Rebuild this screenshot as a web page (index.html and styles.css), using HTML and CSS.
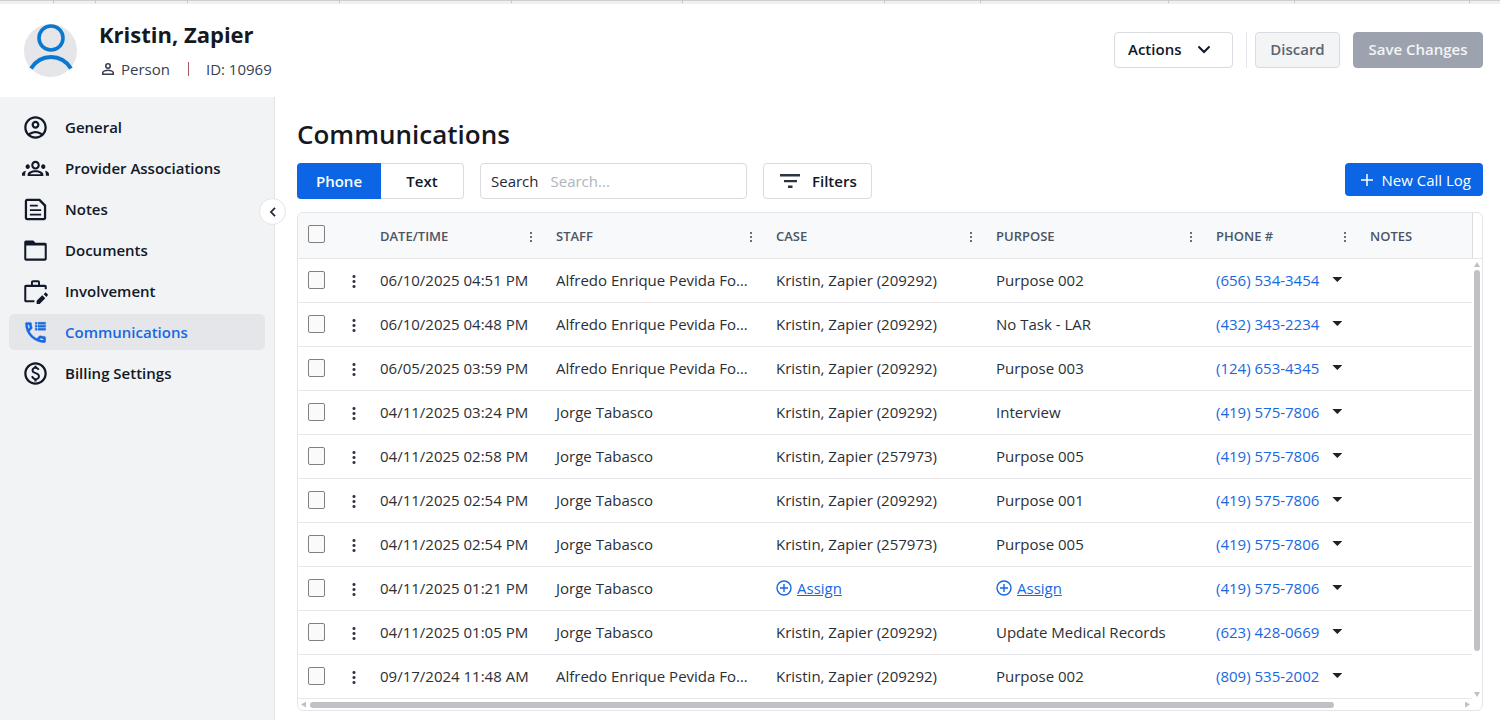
FILE: index.html
```
<!DOCTYPE html>
<html lang="en">
<head>
<meta charset="utf-8">
<title>Kristin, Zapier – Communications</title>
<link rel="stylesheet" href="styles.css">
</head>
<body>
<div class="tabstrip" aria-hidden="true"><i></i><i></i><i></i><i></i><i></i><i></i><i></i><i></i><i></i><i></i><i></i></div>
<header class="header">
  <svg class="avatar" viewBox="0 0 53 53" aria-hidden="true"><circle cx="26.500" cy="26.500" r="26.500" fill="#e5e6ea"/><circle cx="27" cy="14" r="12" fill="none" stroke="#0b78d0" stroke-width="3.600"/><path d="M7 44.500C12 36.500 19 33 27 33s15 3.500 20 11.500" fill="none" stroke="#0b78d0" stroke-width="4"/></svg>
  <div class="identity">
    <h2 class="name">Kristin, Zapier</h2>
    <div class="meta">
      <svg class="person" viewBox="0 0 12 12" fill="none" stroke="currentColor" stroke-width="1.600" aria-hidden="true"><circle cx="6" cy="3" r="2.200"/><path d="M.8 11.200V9.600C.8 8.200 4 7.200 6 7.200s5.200 1 5.200 2.400v1.600z"/></svg>
      <span>Person</span><span class="bar"></span><span>ID: 10969</span>
    </div>
  </div>
  <div class="header-actions">
    <button class="btn actions" type="button">Actions
      <svg width="14" height="9" viewBox="0 0 14 9" fill="none" stroke="currentColor" stroke-width="2" aria-hidden="true"><path d="M1.500 1.500 7 7l5.500-5.500"/></svg></button>
    <span class="rule"></span>
    <button class="btn discard" type="button">Discard</button>
    <button class="btn save" type="button">Save Changes</button>
  </div>
</header>
<div class="body">
  <aside class="sidebar">
    <nav class="nav">
      <a class="item" href="#"><svg viewBox="0 0 24 24"><path d="M12 2C6.480 2 2 6.480 2 12s4.480 10 10 10 10-4.480 10-10S17.520 2 12 2zM7.350 18.500C8.660 17.560 10.260 17 12 17s3.340.560 4.650 1.500C15.340 19.440 13.740 20 12 20s-3.340-.560-4.650-1.500zm10.790-1.380C16.450 15.800 14.320 15 12 15s-4.450.800-6.140 2.120C4.700 15.730 4 13.950 4 12c0-4.420 3.580-8 8-8s8 3.580 8 8c0 1.950-.700 3.730-1.860 5.120z"/><path d="M12 6c-1.930 0-3.500 1.570-3.500 3.500S10.070 13 12 13s3.500-1.570 3.500-3.500S13.930 6 12 6zm0 5c-.830 0-1.500-.670-1.500-1.500S11.170 8 12 8s1.500.670 1.500 1.500S12.830 11 12 11z"/></svg>General</a>
      <a class="item" href="#"><svg viewBox="0 0 24 24"><path d="M5 12.500c1.100 0 2-.900 2-2s-.700-2.300-1.800-2.300-2 .900-2 2 .700 2.300 1.800 2.300zM3.500 14C1.300 14.400 0 15.600 0 17.200V18.500h2.800v-1.300c0-1.200.300-2.200.700-3.200zM19 12.500c-1.100 0-2-.900-2-2s.700-2.300 1.800-2.300 2 .900 2 2-.700 2.300-1.800 2.300zM20.500 14c2.200.400 3.500 1.600 3.500 3.200v1.300h-2.800v-1.300c0-1.200-.300-2.200-.700-3.200zM12 13.500c-3.500 0-7 1.400-7 3.900v1.300h14v-1.300c0-2.500-3.500-3.900-7-3.900zM7.300 17c.7-1 2.600-1.600 4.700-1.600s4 .6 4.700 1.600zM12 7.200c1.100 0 1.900.8 1.900 1.900S13.100 11 12 11s-1.900-.8-1.900-1.900.8-1.900 1.900-1.900m0-2C9.800 5.200 8.200 6.900 8.200 9.100S9.800 12.900 12 12.900s3.800-1.600 3.800-3.800S14.200 5.200 12 5.200z"/></svg>Provider Associations</a>
      <a class="item" href="#"><svg viewBox="0 0 24 24"><path d="M7 15.700h10v1.600H7zM7 11.700h10v1.600H7zM7 7.700h7v1.600H7zM16 2.500H4.500c-1.100 0-2 .900-2 2v15c0 1.100.900 2 2 2h15c1.100 0 2-.900 2-2V8l-5.500-5.500zm3.500 17h-15v-15H15l4.500 4.500v10.500z"/></svg>Notes</a>
      <a class="item" href="#"><svg viewBox="0 0 24 24"><path d="M20.500 5H12l-2-2H3.500C2.600 3 2 3.700 2 4.600v14.800c0 .9.700 1.600 1.600 1.600h16.800c.9 0 1.600-.7 1.600-1.600V6.600C22 5.700 21.400 5 20.500 5zm-.3 14.200H3.800V7.500h16.400v11.700z"/></svg>Documents</a>
      <a class="item" href="#"><svg viewBox="0 0 24 24"><path d="M3.800 19.700V8h16.400v2H22V7.700c0-.9-.7-1.600-1.600-1.600H16V4c0-1.100-.7-1.900-1.800-1.900H9.800C8.700 2.100 8 2.900 8 4v2.100H3.600C2.700 6.100 2 6.800 2 7.700V20c0 .9.700 1.600 1.600 1.600H11v-1.900zM9.700 3.800h4.600v2.300H9.700zM13 20.300V23h2.700l5-5-2.700-2.700-5 5zM22.800 14.500l-1.300-1.300c-.3-.3-.7-.3-1 0l-1.200 1.200 2.400 2.400 1.100-1.200c.3-.3.3-.8 0-1.100z"/></svg>Involvement</a>
      <a class="item current" href="#" aria-current="page"><svg viewBox="0 0 24 24"><path d="M14.200 2.800H21v1.800h-6.800zM14.200 5.500H21v1.800h-6.800zM14.200 8.200H21V10h-6.800zM11.800 2.800h1.600v1.800h-1.600zM11.800 5.500h1.600v1.800h-1.600zM11.800 8.200h1.600V10h-1.600zM20 15.500c-1.250 0-2.450-.200-3.570-.570-.350-.110-.740-.030-1.020.240l-2.200 2.200c-2.830-1.440-5.150-3.750-6.590-6.590l2.200-2.200c.280-.280.360-.670.250-1.020C8.700 6.450 8.500 5.250 8.500 4c0-.550-.450-1-1-1H4c-.550 0-1 .450-1 1 0 9.390 7.610 17 17 17 .550 0 1-.450 1-1v-3.500c0-.550-.450-1-1-1zM5.030 5h1.500c.070.880.220 1.750.460 2.590L5.790 8.800C5.380 7.590 5.120 6.320 5.030 5zM19 18.970c-1.320-.090-2.590-.350-3.800-.750l1.200-1.200c.850.240 1.710.390 2.600.450v1.500z" stroke="currentColor" stroke-width=".3"/></svg>Communications</a>
      <a class="item" href="#"><svg viewBox="0 0 24 24"><path d="M12 2C6.480 2 2 6.480 2 12s4.480 10 10 10 10-4.480 10-10S17.520 2 12 2zm0 18c-4.410 0-8-3.590-8-8s3.590-8 8-8 8 3.590 8 8-3.590 8-8 8z"/><path d="M12.900 11.100c-1.780-.590-2.640-.960-2.640-1.900 0-1.020 1.110-1.390 1.810-1.390 1.310 0 1.790.990 1.900 1.340l1.580-.670c-.150-.450-.820-1.920-2.540-2.240V5h-2v1.260c-2.480.560-2.490 2.860-2.490 2.960 0 2.270 2.250 2.910 3.350 3.310 1.580.560 2.280 1.070 2.280 2.030 0 1.130-1.050 1.610-1.980 1.610-1.820 0-2.340-1.870-2.400-2.090l-1.660.670c.630 2.190 2.280 2.780 2.900 2.960V19h2v-1.240c.400-.090 2.900-.590 2.900-3.220 0-1.390-.610-2.610-3.010-3.440z"/></svg>Billing Settings</a>
    </nav>
    <button class="collapse" type="button" aria-label="Collapse menu"><svg width="8" height="10" viewBox="0 0 8 10" fill="none" stroke="currentColor" stroke-width="1.800" aria-hidden="true"><path d="M6 .8 2 5l4 4.200"/></svg></button>
  </aside>
  <main class="main">
    <h1 class="title">Communications</h1>
    <div class="toolbar">
      <div class="toggle">
        <button class="seg on" type="button">Phone</button><button class="seg" type="button">Text</button>
      </div>
      <div class="search"><label for="q">Search</label><input id="q" type="text" placeholder="Search..."></div>
      <button class="btn filters" type="button"><svg width="20" height="14" viewBox="0 0 20 14" fill="#2b3345" aria-hidden="true"><path d="M0 0h20v2.500H0zM4 6h13v2.300H4zM8 11.500h4.500V14H8z"/></svg>Filters</button>
      <button class="new" type="button"><svg width="12" height="12" viewBox="0 0 12 12" stroke="currentColor" stroke-width="1.500" aria-hidden="true"><path d="M6 0v12M0 6h12"/></svg>New Call Log</button>
    </div>
    <div class="panel">
      <table class="grid">
        <colgroup><col class="c-check"><col class="c-menu"><col class="c-date"><col class="c-wide"><col class="c-wide"><col class="c-wide"><col class="c-phone"><col></colgroup>
        <thead><tr>
          <th><input type="checkbox" aria-label="Select all"></th><th></th>
          <th><div class="head">DATE/TIME<button class="dots" type="button" aria-label="Date/time column menu"></button></div></th>
          <th><div class="head">STAFF<button class="dots" type="button" aria-label="Staff column menu"></button></div></th>
          <th><div class="head">CASE<button class="dots" type="button" aria-label="Case column menu"></button></div></th>
          <th><div class="head">PURPOSE<button class="dots" type="button" aria-label="Purpose column menu"></button></div></th>
          <th><div class="head">PHONE #<button class="dots" type="button" aria-label="Phone column menu"></button></div></th>
          <th>NOTES</th>
        </tr></thead>
        <tbody id="rows"></tbody>
      </table>
      <div class="gutter">
        <div class="corner"></div>
        <div class="vbar"><i class="arrow up"></i><div class="vtrack"><div class="vthumb"></div></div><i class="arrow down"></i></div>
      </div>
      <div class="hbar"><i class="arrow left"></i><div class="htrack"><div class="hthumb"></div></div><i class="arrow right"></i></div>
    </div>
  </main>
</div>
<script src="rows.js"></script>
</body>
</html>
```
FILE: rows.js
```
const calls = [
  ["06/10/2025 04:51 PM", "Alfredo Enrique Pevida Fonseca", "Kristin, Zapier (209292)", "Purpose 002", "(656) 534-3454"],
  ["06/10/2025 04:48 PM", "Alfredo Enrique Pevida Fonseca", "Kristin, Zapier (209292)", "No Task - LAR", "(432) 343-2234"],
  ["06/05/2025 03:59 PM", "Alfredo Enrique Pevida Fonseca", "Kristin, Zapier (209292)", "Purpose 003", "(124) 653-4345"],
  ["04/11/2025 03:24 PM", "Jorge Tabasco", "Kristin, Zapier (209292)", "Interview", "(419) 575-7806"],
  ["04/11/2025 02:58 PM", "Jorge Tabasco", "Kristin, Zapier (257973)", "Purpose 005", "(419) 575-7806"],
  ["04/11/2025 02:54 PM", "Jorge Tabasco", "Kristin, Zapier (209292)", "Purpose 001", "(419) 575-7806"],
  ["04/11/2025 02:54 PM", "Jorge Tabasco", "Kristin, Zapier (257973)", "Purpose 005", "(419) 575-7806"],
  ["04/11/2025 01:21 PM", "Jorge Tabasco", null, null, "(419) 575-7806"],
  ["04/11/2025 01:05 PM", "Jorge Tabasco", "Kristin, Zapier (209292)", "Update Medical Records", "(623) 428-0669"],
  ["09/17/2024 11:48 AM", "Alfredo Enrique Pevida Fonseca", "Kristin, Zapier (209292)", "Purpose 002", "(809) 535-2002"]
];
const assign = '<a class="assign" href="#"><svg width="16" height="16" viewBox="0 0 16 16" fill="none" stroke="currentColor" stroke-width="1.400" aria-hidden="true"><circle cx="8" cy="8" r="7"/><path d="M8 4v8M4 8h8"/></svg><span>Assign</span></a>';
document.getElementById("rows").innerHTML = calls.map(([date, staff, who, purpose, phone]) => `<tr>
  <td><input type="checkbox" aria-label="Select call ${date}"></td>
  <td><button class="dots row-dots" type="button" aria-label="Row menu"></button></td>
  <td>${date}</td><td>${staff}</td><td>${who || assign}</td><td>${purpose || assign}</td>
  <td><div class="phone"><a href="#">${phone}</a><button class="caret" type="button" aria-label="Phone options"></button></div></td>
  <td></td></tr>`).join("");
```
FILE: styles.css
```
* { box-sizing: border-box; }
html, body { height: 100%; }
body {
  margin: 0;
  display: flex;
  flex-direction: column;
  overflow: hidden;
  background: #fff;
  color: #1f2937;
  font: 15px/20px "Open Sans", sans-serif;
}
button { font: inherit; color: inherit; cursor: pointer; }
a { color: #1668e3; text-decoration: none; }
svg { flex: none; }

.tabstrip {
  flex: none;
  height: 4px;
  display: grid;
  grid-template-columns: 54fr 42fr 92fr 152fr 172fr 171fr 203fr 96fr 188fr 126fr 175fr;
  padding-right: 2%;
  background: linear-gradient(#cfcfd3 1px, #f0f0f3 1px);
}
.tabstrip i { height: 3px; border-right: 1px solid #c4c4c9; }

.header { flex: none; height: 93px; display: flex; padding: 18px 17px 0 24px; }
.avatar { width: 53px; height: 53px; margin-top: 2px; }
.identity { margin-left: 22px; }
.name { margin: 0; color: #15191f; font-size: 22px; line-height: 24px; font-weight: 700; }
.meta { display: flex; align-items: center; margin-top: 13px; padding-left: 3px; color: #374151; }
.person { width: 12px; height: 12px; margin-right: 7px; }
.bar { width: 1px; height: 14px; margin: 0 17px 0 18px; background: #a85a5a; }
.header-actions { display: flex; align-items: flex-start; margin-left: auto; padding-top: 10px; }
.btn {
  height: 36px;
  border: 1px solid #d9dbe1;
  border-radius: 4px;
  padding: 0 14px;
  background: #fff;
  color: #111827;
  font-weight: 600;
}
.actions { display: flex; align-items: center; gap: 16px; width: 119px; padding: 0 13px 2px; white-space: nowrap; }
.rule { width: 1px; height: 36px; margin: 0 8px 0 13px; background: #e5e7eb; }
.discard { width: 85px; padding: 0 0 2px; background: #f3f4f6; color: #5b6470; }
.save { width: 130px; margin-left: 13px; padding: 0 0 2px; border-color: #9ca3af; background: #9ca3af; color: #f3f4f6; }

.body { flex: 1; min-height: 0; display: flex; }
.sidebar { position: relative; flex: none; width: 275px; padding: 12px 9px; background: #f2f3f5; border-right: 1px solid #e2e4e8; }
.nav { display: flex; flex-direction: column; gap: 5px; }
.item { display: flex; align-items: center; gap: 16px; height: 36px; padding-left: 13px; border-radius: 5px; color: #111827; font-weight: 600; }
.item svg { width: 27px; height: 27px; fill: currentColor; }
.current { background: #e5e6ea; color: #1668e3; }
.collapse {
  position: absolute; top: 101px; right: -12px;
  display: grid; place-items: center;
  width: 27px; height: 27px; padding: 0;
  border: 1px solid #e2e4e8; border-radius: 50%;
  background: #fff;
}

.main { flex: 1; min-width: 0; padding: 21px 17px 0 22px; }
.title { margin: 0; color: #15191f; font-size: 26px; line-height: 32px; font-weight: 600; }
.toolbar { display: flex; align-items: center; margin: 13px 0; }
.toggle { display: flex; }
.seg { width: 83px; height: 36px; padding: 0 0 1px; border: 1px solid #d9dbe1; border-left: 0; border-radius: 0 4px 4px 0; background: #fff; color: #111827; font-weight: 600; }
.on { width: 84px; border: 0; border-radius: 4px 0 0 4px; background: #0b65e4; color: #fff; }
.search { display: flex; align-items: center; gap: 12px; width: 267px; height: 36px; margin: 0 16px; padding: 0 10px; border: 1px solid #d9dbe1; border-radius: 4px; }
.search input { flex: 1; min-width: 0; padding: 0; border: 0; outline: 0; font: inherit; }
.search input::placeholder { color: #aeb4bd; }
.filters { display: flex; align-items: center; gap: 12px; padding: 0 14px 0 16px; }
.new { display: flex; align-self: flex-start; align-items: center; gap: 9px; height: 33px; margin-left: auto; padding: 0 12px 0 16px; border: 0; border-radius: 4px; background: #0b65e4; color: #fff; font-weight: 500; }

.panel { display: grid; grid-template-columns: minmax(0, 1fr) 10px; border: 1px solid #e4e5e8; border-radius: 6px; overflow: hidden; }
.grid { width: 100%; table-layout: fixed; border-collapse: separate; border-spacing: 0; }
.c-check { width: 37px; }
.c-menu { width: 29px; }
.c-date { width: 176px; }
.c-wide { width: 220px; }
.c-phone { width: 154px; }
th, td { padding: 0 6px 0 16px; border-bottom: 1px solid #e8e8ea; text-align: left; white-space: nowrap; overflow: hidden; text-overflow: ellipsis; }
td { height: 44px; padding-bottom: 2px; color: #2b2f36; }
th { height: 46px; background: #f8f9fb; color: #4b5563; font-size: 13px; font-weight: 600; }
th:first-child, td:first-child { padding: 0 0 2px 10px; }
th:first-child { padding-bottom: 4px; }
th:nth-child(2), td:nth-child(2) { padding: 0; }
input[type="checkbox"] { appearance: none; display: block; width: 17px; height: 18px; margin: 0; border: 1px solid #808080; border-radius: 2px; background: #fafafa; }
.head { display: flex; align-items: center; justify-content: space-between; }
.dots { width: 2px; height: 10px; margin: 2px 2px 0 0; padding: 0; border: 0; background: repeating-linear-gradient(#6b6f7c 0 2px, transparent 2px 4px); }
.row-dots { display: block; width: 4px; height: 15px; margin: 1px 0 0 17px; background: radial-gradient(circle, #2f3548 1px, transparent 2px) 0 0 / 4px 5px; }
.phone { display: flex; align-items: center; gap: 13px; }
.caret { width: 10px; height: 5px; padding: 0; border: 0; background: #222; clip-path: polygon(0 0, 100% 0, 50% 100%); }
.assign { display: flex; align-items: center; gap: 5px; }
.assign span { text-decoration: underline; }

.gutter { display: flex; flex-direction: column; }
.corner { height: 46px; border-left: 1px solid #dcdde0; border-bottom: 1px solid #e8e8ea; }
.vbar { flex: 1; display: flex; flex-direction: column; align-items: center; justify-content: space-between; padding: 3px 0 2px; }
.vtrack { flex: 1; padding: 3px 0; }
.vthumb { width: 6px; height: 91%; border-radius: 3px; background: #c1c1c5; }
.arrow { width: 6px; height: 5px; background: #c1c1c5; }
.up { clip-path: polygon(50% 0, 100% 100%, 0 100%); }
.down { clip-path: polygon(0 0, 100% 0, 50% 100%); }
.left { width: 5px; height: 6px; clip-path: polygon(100% 0, 100% 100%, 0 50%); }
.right { width: 5px; height: 6px; clip-path: polygon(0 0, 100% 50%, 0 100%); }
.hbar { display: flex; align-items: center; height: 11px; padding: 0 2px 0 3px; }
.htrack { flex: 1; padding: 0 4px; }
.hthumb { width: 89%; height: 6px; border-radius: 3px; background: #c1c1c5; }
```
